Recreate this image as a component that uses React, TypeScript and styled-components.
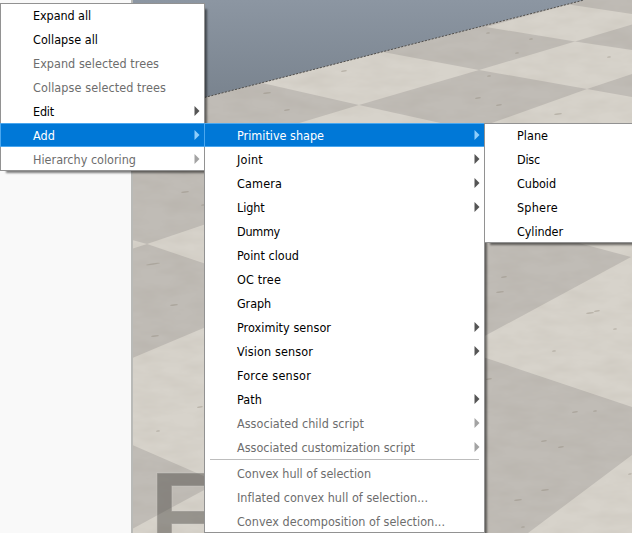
import React, { useLayoutEffect, useRef } from "react";
import styled, { createGlobalStyle } from "styled-components";

const GlobalStyle = createGlobalStyle`
  html, body { margin: 0; padding: 0; overflow: hidden; }
`;

const Workspace = styled.main`
  position: relative;
  display: grid;
  grid-template-columns: 131px 1fr;
  width: 632px;
  height: 533px;
  overflow: hidden;
  background: #f9f9f9;
  font-family: "DejaVu Sans Condensed", "DejaVu Sans", sans-serif;
  font-stretch: condensed;
  font-size: 12.5px;
`;

const HierarchyPanel = styled.aside`
  background: #f9f9f9;
`;

const Viewport = styled.section`
  position: relative;
  overflow: hidden;
  border-left: 2px solid #b9bab7;
`;

const Scene = styled.svg`
  display: block;
`;

const Watermark = styled.span`
  position: absolute;
  left: 17px;
  top: 458px;
  font: bold 100px/100px "Liberation Sans", sans-serif;
  color: rgba(74, 72, 68, 0.46);
  -webkit-text-stroke: 1px rgba(215, 213, 207, 0.35);
  transform: scale(1.04, 1.17);
  transform-origin: 0 18px;
`;

const Menu = styled.ul<{ $x: number; $y: number; $width: number }>`
  position: absolute;
  left: ${(p) => p.$x}px;
  top: ${(p) => p.$y}px;
  width: ${(p) => p.$width}px;
  margin: 0;
  padding: 0;
  list-style: none;
  background: #fff;
  box-shadow:
    inset 0 0 0 1px #929292,
    4px 4px 2px -2px rgba(0, 0, 0, 0.5);
`;

const Item = styled.li<{ $active?: boolean; $disabled?: boolean }>`
  display: flex;
  align-items: center;
  justify-content: space-between;
  box-sizing: border-box;
  height: 24px;
  padding: 0 5px 0 33px;
  white-space: nowrap;
  color: ${(p) => (p.$active ? "#fff" : p.$disabled ? "#6d6d6d" : "#000")};
  background: ${(p) => (p.$active ? "#0078d7" : "transparent")};
  box-shadow: ${(p) => (p.$active ? "inset 0 0 0 1px #4aa7ef" : "none")};
`;

const Label = styled.span`
  padding-top: 2px;
  line-height: 22px;
`;

const Arrow = styled.svg<{ $tone: string }>`
  display: block;
  fill: ${(p) => p.$tone};
`;

const Separator = styled.li`
  height: 1px;
  margin: 0 6px 1px;
  background: #bdbdbd;
`;

type Entry = {
  text: string;
  width: number;
  sub?: boolean;
  active?: boolean;
  disabled?: boolean;
  separated?: boolean;
};

const rootEntries: Entry[] = [
  { text: "Expand all", width: 58 },
  { text: "Collapse all", width: 65 },
  { text: "Expand selected trees", width: 126, disabled: true },
  { text: "Collapse selected trees", width: 133, disabled: true },
  { text: "Edit", width: 21, sub: true },
  { text: "Add", width: 22, sub: true, active: true },
  { text: "Hierarchy coloring", width: 103, sub: true, disabled: true },
];

const addEntries: Entry[] = [
  { text: "Primitive shape", width: 87, sub: true, active: true },
  { text: "Joint", width: 26, sub: true },
  { text: "Camera", width: 45, sub: true },
  { text: "Light", width: 27.5, sub: true },
  { text: "Dummy", width: 43 },
  { text: "Point cloud", width: 62 },
  { text: "OC tree", width: 44 },
  { text: "Graph", width: 34 },
  { text: "Proximity sensor", width: 94, sub: true },
  { text: "Vision sensor", width: 76, sub: true },
  { text: "Force sensor", width: 74 },
  { text: "Path", width: 25, sub: true },
  { text: "Associated child script", width: 127, sub: true, disabled: true },
  { text: "Associated customization script", width: 178, sub: true, disabled: true },
  { text: "Convex hull of selection", width: 134, disabled: true, separated: true },
  { text: "Inflated convex hull of selection...", width: 191, disabled: true },
  { text: "Convex decomposition of selection...", width: 208, disabled: true },
];

const shapeEntries: Entry[] = [
  { text: "Plane", width: 31 },
  { text: "Disc", width: 23 },
  { text: "Cuboid", width: 39 },
  { text: "Sphere", width: 41 },
  { text: "Cylinder", width: 46 },
];

function FittedLabel({ text, width }: { text: string; width: number }) {
  const ref = useRef<HTMLSpanElement>(null);
  useLayoutEffect(() => {
    const el = ref.current;
    if (!el) return;
    el.style.letterSpacing = "0px";
    const natural = el.getBoundingClientRect().width;
    el.style.letterSpacing = `${(width - natural) / text.length}px`;
  }, [text, width]);
  return <Label ref={ref}>{text}</Label>;
}

function MenuEntries({ entries }: { entries: Entry[] }) {
  return (
    <>
      {entries.map((e) => (
        <React.Fragment key={e.text}>
          {e.separated && <Separator />}
          <Item $active={e.active} $disabled={e.disabled}>
            <FittedLabel text={e.text} width={e.width} />
            {e.sub && (
              <Arrow
                $tone={e.active ? "#8fcdfb" : e.disabled ? "#a3a3a3" : "#555"}
                width="6"
                height="12"
                viewBox="0 0 6 12"
              >
                <path d="M0.5 1V11L5.5 6Z" />
              </Arrow>
            )}
          </Item>
        </React.Fragment>
      ))}
    </>
  );
}

const lightTiles = [
  "262,83 383,52 479,70 359,105",
  "486,27 569,4.5 632,14 632,24.5 575,41.5",
  "479,70 575,41.5 632,50 632,74 587,89",
  "359,105 445,124 296,124",
  "587,89 632,97 632,130 489,124",
  "575,242 633,242 633,257.5 631,257",
  "631,257 480,338.5 480,356 632,407 640,407 640,257",
  "632,455 528,533 632,533",
  "130,239.5 147,244 130,249.5",
  "147,244 206,224 206,264",
  "206,327 130,359 130,444 206,477",
  "130,530 206,489 206,535 130,535",
];

const specks = [
  [267, 93, 4], [287, 110, 3], [344, 71, 3], [488, 33, 2], [531, 39, 2],
  [517, 53, 2], [478, 98, 3], [489, 76, 2], [499, 105, 3], [558, 114, 4],
  [609, 57, 2], [185, 192, 4], [203, 205, 2], [153, 264, 7], [174, 305, 4],
  [155, 336, 4], [200, 407, 3], [158, 431, 2], [504, 277, 3], [500, 292, 4],
  [597, 311, 3], [590, 313, 4], [615, 329, 2], [554, 351, 2], [489, 379, 3],
  [575, 412, 3], [595, 411, 2], [544, 441, 3], [561, 447, 3], [545, 490, 4],
  [518, 500, 4], [523, 527, 2], [630, 474, 2],
];

export default function App() {
  return (
    <Workspace>
      <GlobalStyle />
      <HierarchyPanel />
      <Viewport>
        <Scene width="499" height="533" viewBox="133 0 499 533">
          <defs>
            <linearGradient id="sky" x1="0" y1="0" x2="0" y2="1">
              <stop offset="0" stopColor="#8c96a2" />
              <stop offset="1" stopColor="#757f8a" />
            </linearGradient>
            <filter id="grain" x="0" y="0" width="100%" height="100%" colorInterpolationFilters="sRGB">
              <feTurbulence type="fractalNoise" baseFrequency="0.03 0.08" numOctaves="3" seed="8" />
              <feColorMatrix values="0 0 0 0 0.5  0 0 0 0 0.46  0 0 0 0 0.4  0.14 0 0 0 -0.045" />
            </filter>
            <clipPath id="floor">
              <path d="M130 116.6L584 0H640V540H130Z" />
            </clipPath>
          </defs>
          <rect x="130" width="510" height="120" fill="url(#sky)" />
          <g clipPath="url(#floor)">
            <rect x="130" width="510" height="540" fill="#c0bcb6" />
            {lightTiles.map((points) => (
              <polygon key={points} points={points} fill="#d7d3cb" />
            ))}
            <rect x="130" width="510" height="540" filter="url(#grain)" />
            {specks.map(([x, y, r]) => (
              <ellipse
                key={`${x}-${y}`}
                cx={x}
                cy={y}
                rx={r}
                ry="0.8"
                fill="#8b8175"
                opacity="0.36"
                transform={`rotate(-8 ${x} ${y})`}
              />
            ))}
          </g>
          <path d="M130 116.6L584 0" stroke="#504e4b" strokeWidth="1" strokeDasharray="2 1.5" />
        </Scene>
        <Watermark>F</Watermark>
      </Viewport>
      <Menu $x={0} $y={3} $width={205}>
        <MenuEntries entries={rootEntries} />
      </Menu>
      <Menu $x={204} $y={123} $width={281}>
        <MenuEntries entries={addEntries} />
      </Menu>
      <Menu $x={484} $y={123} $width={160}>
        <MenuEntries entries={shapeEntries} />
      </Menu>
    </Workspace>
  );
}
